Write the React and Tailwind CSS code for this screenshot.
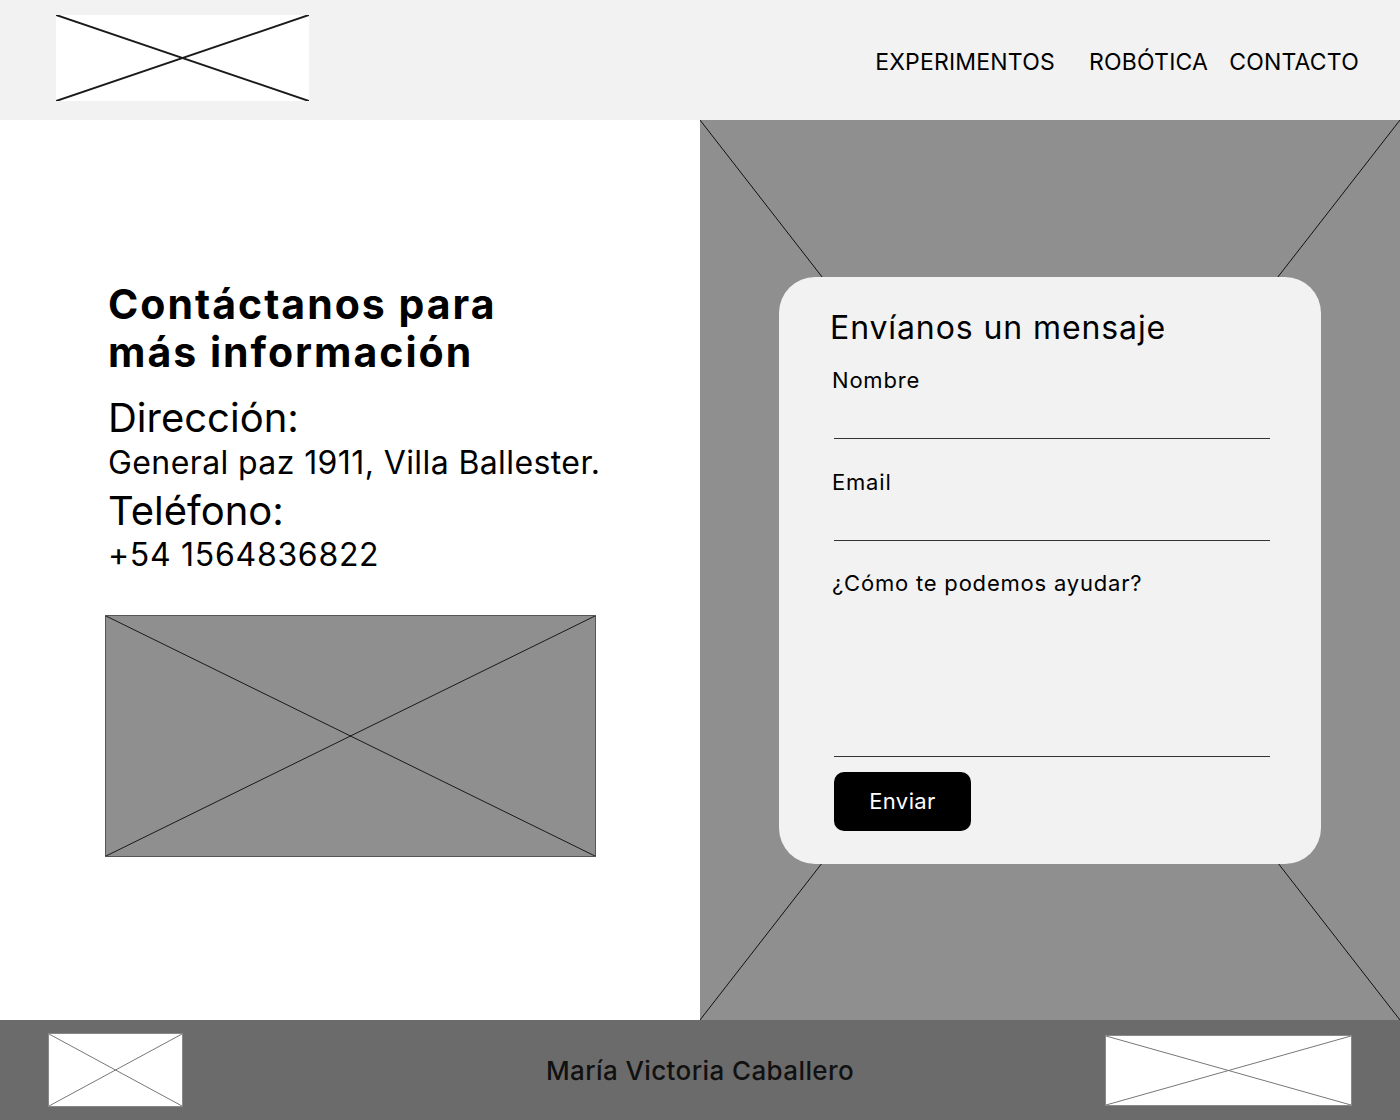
const sans = { fontFamily: 'Inter, "Noto Sans", sans-serif' };

const Placeholder = ({ className = '', stroke = '#1a1a1a', strokeWidth = 1 }) => (
  <div className={`relative ${className}`}>
    <svg className="absolute inset-0 w-full h-full" viewBox="0 0 100 100" preserveAspectRatio="none">
      <line x1="0" y1="0" x2="100" y2="100" stroke={stroke} strokeWidth={strokeWidth} vectorEffect="non-scaling-stroke" />
      <line x1="100" y1="0" x2="0" y2="100" stroke={stroke} strokeWidth={strokeWidth} vectorEffect="non-scaling-stroke" />
    </svg>
  </div>
);

const Field = ({ label, height }) => (
  <div className="flex flex-col">
    <label className="text-[22px] leading-7 tracking-[0.8px] text-black ml-[2px]">{label}</label>
    <div className={height} />
    <div className="ml-[4px] border-b border-[#333]" />
  </div>
);

export default function App() {
  return (
    <div className="w-[1400px] min-h-[1120px] flex flex-col bg-white text-black" style={sans}>
      {/* Header */}
      <header className="h-[120px] bg-[#f2f2f2] flex items-center justify-between pl-[56px] pr-[41px]">
        <Placeholder className="w-[253px] h-[86px] bg-white -mt-[4px]" strokeWidth={2} />
        <nav className="flex items-center text-[23px] tracking-[0.2px] mt-[4px]">
          <a href="#" className="mr-[34px]">EXPERIMENTOS</a>
          <a href="#" className="mr-[21px]">ROBÓTICA</a>
          <a href="#">CONTACTO</a>
        </nav>
      </header>

      {/* Main */}
      <main className="h-[900px] flex">
        {/* Left: contact info */}
        <section className="w-[700px] pt-[160px] pl-[108px]">
          <h1 className="text-[41px] leading-[48px] font-bold tracking-[2px]">
            Contáctanos para
            <br />
            más información
          </h1>
          <p className="mt-[19px] text-[40px] leading-[46px]">Dirección:</p>
          <p className="mt-[2px] text-[32px] leading-10 tracking-[0.4px]">General paz 1911, Villa Ballester.</p>
          <p className="mt-[5px] text-[40px] leading-[46px]">Teléfono:</p>
          <p className="mt-[1px] text-[32px] leading-10 tracking-[0.7px]">+54 1564836822</p>
          <Placeholder className="mt-[40px] -ml-[3px] w-[491px] h-[242px] bg-[#8f8f8f] border border-[#555]" />
        </section>

        {/* Right: form */}
        <section className="relative w-[700px] bg-[#8f8f8f] flex items-center justify-center">
          <svg className="absolute inset-0 w-full h-full" viewBox="0 0 700 900" preserveAspectRatio="none">
            <line x1="0" y1="0" x2="700" y2="900" stroke="#111" strokeWidth="1" />
            <line x1="700" y1="0" x2="0" y2="900" stroke="#111" strokeWidth="1" />
          </svg>
          <form className="relative w-[542px] h-[587px] bg-[#f2f2f2] rounded-[36px] pt-[31px] pl-[51px] pr-[51px] flex flex-col">
            <h2 className="text-[32px] leading-10 tracking-[0.9px]">Envíanos un mensaje</h2>
            <div className="mt-[18px]">
              <Field label="Nombre" height="h-[44px]" />
            </div>
            <div className="mt-[29px]">
              <Field label="Email" height="h-[44px]" />
            </div>
            <div className="mt-[28px]">
              <Field label="¿Cómo te podemos ayudar?" height="h-[159px]" />
            </div>
            <button type="button" className="mt-[15px] ml-[4px] w-[137px] h-[59px] bg-black text-white text-[22px] tracking-[0.4px] rounded-[10px]">
              Enviar
            </button>
          </form>
        </section>
      </main>

      {/* Footer */}
      <footer className="h-[100px] bg-[#6b6b6b] flex items-center px-[48px]">
        <div className="flex-1 flex">
          <Placeholder className="w-[135px] h-[74px] bg-white border border-[#888]" stroke="#777" />
        </div>
        <span className="text-[26px] font-medium tracking-[0.4px] text-[#111]">María Victoria Caballero</span>
        <div className="flex-1 flex justify-end">
          <Placeholder className="w-[247px] h-[71px] bg-white border border-[#888]" stroke="#777" />
        </div>
      </footer>
    </div>
  );
}
